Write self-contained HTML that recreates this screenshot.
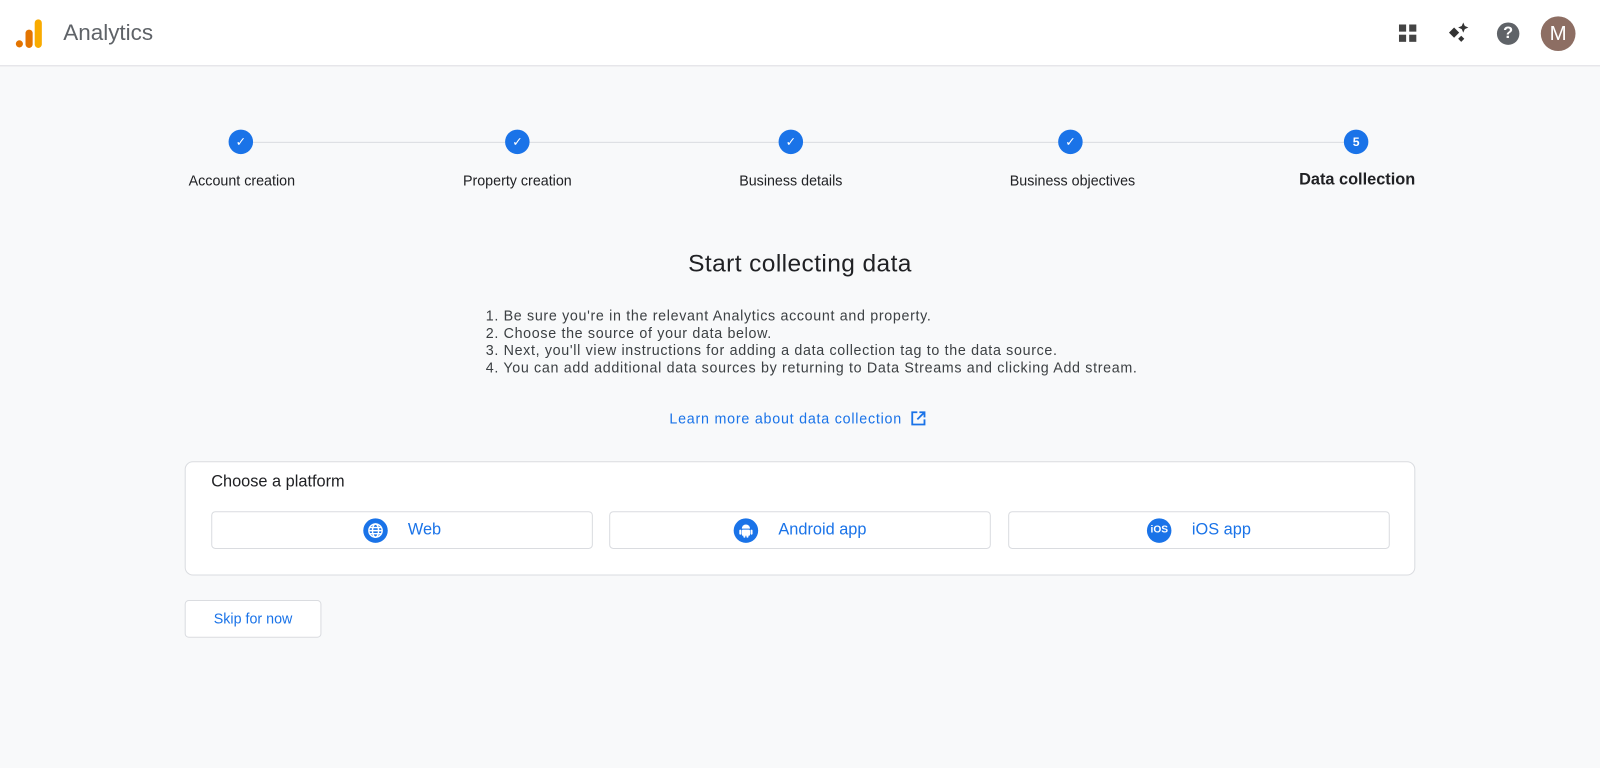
<!DOCTYPE html>
<html><head><meta charset="utf-8"><style>
*{margin:0;padding:0;box-sizing:border-box}
body{width:1600px;height:768px;background:#f8f9fa;font-family:"Liberation Sans",Arial,sans-serif;overflow:hidden;color:#202124}
#w{position:relative;width:1568px;height:753px;transform:scale(1.020408);transform-origin:0 0}
.hdr{position:absolute;left:0;top:0;width:1568px;height:65px;background:#fff;border-bottom:1px solid #dadce0}
.abs{position:absolute}
.circ{position:absolute;width:24px;height:24px;border-radius:50%;background:#1a73e8;top:127px;color:#fff;font-size:12px;text-align:center;line-height:24px}
.lbl{position:absolute;top:169px;font-size:14px;color:#202124;transform:translateX(-50%);white-space:nowrap}
.line{position:absolute;top:139px;height:1px;background:#dadce0}
.btn{position:absolute;top:501px;width:374px;height:37px;border:1px solid #dadce0;border-radius:4px;background:#fff;color:#1a73e8;font-size:16px;display:flex;align-items:center;justify-content:center;gap:20px}
.ic{width:24px;height:24px;border-radius:50%;background:#1a73e8;display:flex;align-items:center;justify-content:center}
</style></head><body><div id="w">
<div class="hdr">
<svg class="abs" style="left:15px;top:17px" width="28" height="32"><circle cx="4" cy="26" r="3.5" fill="#e37400"/><rect x="10" y="12" width="7" height="18" rx="3.5" fill="#e37400"/><rect x="19" y="2" width="7" height="28" rx="3.5" fill="#f9ab00"/></svg>
<div class="abs" style="left:62px;top:19px;font-size:22px;color:#5f6368">Analytics</div>
<svg class="abs" style="left:1370px;top:23px" width="20" height="20"><rect x="1" y="1" width="7" height="7" fill="#444"/><rect x="11" y="1" width="7" height="7" fill="#444"/><rect x="1" y="11" width="7" height="7" fill="#444"/><rect x="11" y="11" width="7" height="7" fill="#444"/></svg>
<svg class="abs" style="left:1417px;top:20px" width="26" height="26"><path d="M8 7 L13 12 L8 17 L3 12Z" fill="#333"/><path d="M17 2 L18.5 5.5 L22 7 L18.5 8.5 L17 12 L15.5 8.5 L12 7 L15.5 5.5Z" fill="#333"/><path d="M15 15 L18 18 L15 21 L12 18Z" fill="#333"/></svg>
<div class="abs" style="left:1467px;top:22px;width:22px;height:22px;border-radius:50%;background:#5f6368;color:#fff;font-weight:bold;font-size:16px;text-align:center;line-height:22px">?</div>
<div class="abs" style="left:1510px;top:16px;width:34px;height:34px;border-radius:50%;background:#8d6e63;color:#fff;font-size:20px;text-align:center;line-height:34px">M</div>
</div>
<div class="line" style="left:248px;width:1070px"></div>
<div class="circ" style="left:224px">✓</div>
<div class="circ" style="left:495px">✓</div>
<div class="circ" style="left:763px">✓</div>
<div class="circ" style="left:1037px">✓</div>
<div class="circ" style="left:1317px;font-weight:bold">5</div>
<div class="lbl" style="left:237px">Account creation</div>
<div class="lbl" style="left:507px">Property creation</div>
<div class="lbl" style="left:775px">Business details</div>
<div class="lbl" style="left:1051px">Business objectives</div>
<div class="lbl" style="left:1330px;font-size:16px;font-weight:bold;top:168px">Data collection</div>
<div class="abs" style="left:0;width:1568px;top:245px;text-align:center;font-size:24px;color:#202124;letter-spacing:0.4px">Start collecting data</div>
<div class="abs" style="left:476px;top:301px;font-size:14px;line-height:17px;color:#3c4043;letter-spacing:0.65px">1. Be sure you're in the relevant Analytics account and property.<br>2. Choose the source of your data below.<br>3. Next, you'll view instructions for adding a data collection tag to the data source.<br>4. You can add additional data sources by returning to Data Streams and clicking Add stream.</div>
<div class="abs" style="left:656px;top:402px;font-size:14px;color:#1a73e8;letter-spacing:0.75px">Learn more about data collection</div>
<svg class="abs" style="left:892px;top:402px" width="16" height="16" fill="none" stroke="#1a73e8" stroke-width="1.8"><path d="M7 2H2v12h12V9"/><path d="M9 2h5v5M14 2L7 9"/></svg>
<div class="abs" style="left:181px;top:452px;width:1206px;height:112px;background:#fff;border:1px solid #dadce0;border-radius:8px"></div>
<div class="abs" style="left:207px;top:464px;font-size:16px">Choose a platform</div>
<div class="btn" style="left:207px"><span class="ic"><svg width="16" height="16" fill="none" stroke="#fff" stroke-width="1.4"><circle cx="8" cy="8" r="6.5"/><ellipse cx="8" cy="8" rx="3" ry="6.5"/><path d="M1.5 8h13M2.5 5h11M2.5 11h11"/></svg></span>Web</div>
<div class="btn" style="left:597px"><span class="ic"><svg width="14" height="16" fill="#fff"><path d="M3 6a4 4 0 0 1 8 0z"/><rect x="3" y="7" width="8" height="6" rx="1"/><rect x="0.5" y="7" width="2" height="5" rx="1"/><rect x="11.5" y="7" width="2" height="5" rx="1"/><rect x="4.5" y="12" width="2" height="3" rx="1"/><rect x="7.5" y="12" width="2" height="3" rx="1"/></svg></span>Android app</div>
<div class="btn" style="left:988px"><span class="ic" style="font-size:10px;color:#fff;font-weight:bold">iOS</span>iOS app</div>
<div class="abs" style="left:181px;top:588px;width:134px;height:37px;border:1px solid #dadce0;border-radius:4px;background:#fff;color:#1a73e8;font-size:14px;text-align:center;line-height:35px">Skip for now</div>
</div></body></html>
